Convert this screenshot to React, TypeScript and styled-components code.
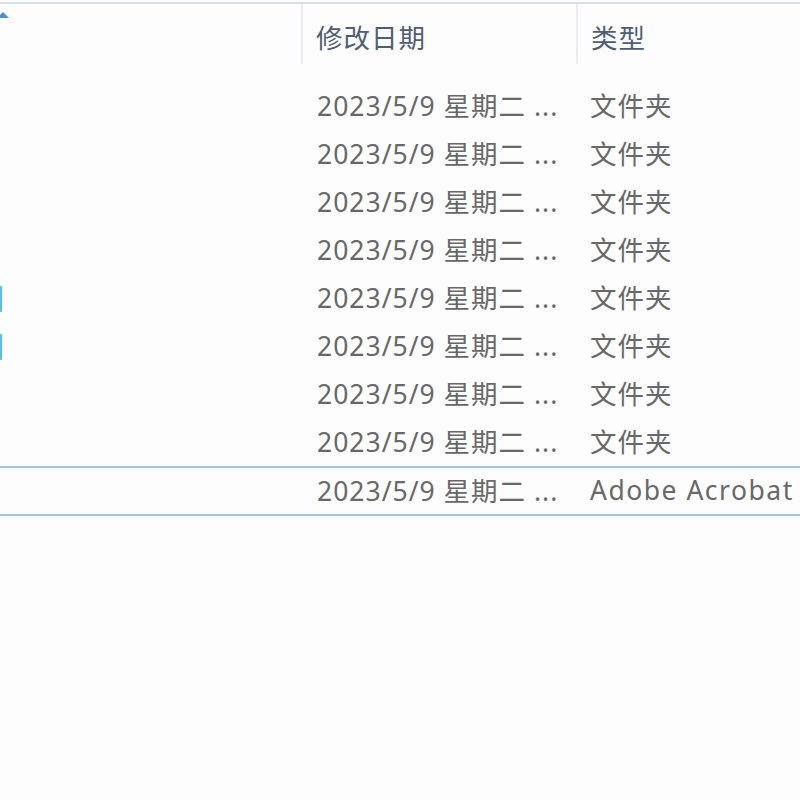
import React from "react";
import styled, { createGlobalStyle } from "styled-components";

const GlobalStyle = createGlobalStyle`
  html, body { margin: 0; padding: 0; background: #fdfdfd; }
  body { font-family: "Noto Sans", "Noto Sans CJK SC", sans-serif; }
  #root { width: 800px; height: 800px; overflow: hidden; }
`;

const COLS = "301px 275px 1fr";

const Page = styled.div`
  width: 800px;
  height: 800px;
  background: #fdfdfd;
  padding-top: 2px;
  box-sizing: border-box;
`;

const TopLine = styled.div`
  height: 2px;
  background: #d6e0e8;
`;

const HeaderRow = styled.div`
  display: grid;
  grid-template-columns: ${COLS};
  height: 60px;
  margin-bottom: 18px;
`;

const HeaderCell = styled.div<{ $sep?: boolean }>`
  position: relative;
  display: flex;
  align-items: center;
  padding-left: ${(p) => (p.$sep ? "13px" : "0")};
  border-left: ${(p) => (p.$sep ? "2px solid #e8ecf1" : "none")};
  font-size: 26.5px;
  letter-spacing: 1px;
  color: #4e5d73;
  padding-top: 4px;
  box-sizing: border-box;
  white-space: nowrap;
`;

const SortArrow = styled.svg`
  position: absolute;
  left: -4px;
  top: 7px;
`;

const Row = styled.div<{ $focused?: boolean }>`
  display: grid;
  grid-template-columns: ${COLS};
  height: ${(p) => (p.$focused ? "50px" : "48px")};
  box-sizing: border-box;
  border-top: 2px solid ${(p) => (p.$focused ? "#a6bfe2" : "transparent")};
  border-bottom: 2px solid ${(p) => (p.$focused ? "#a6bfe2" : "transparent")};
`;

const Cell = styled.div<{ $pad: number; $spacing?: number }>`
  display: flex;
  align-items: center;
  padding-left: ${(p) => p.$pad}px;
  padding-bottom: 3px;
  font-size: 26.5px;
  letter-spacing: ${(p) => p.$spacing ?? 1}px;
  color: #686868;
  white-space: nowrap;
  overflow: hidden;
`;

const IconEdge = styled.span`
  display: block;
  width: 2px;
  height: 26px;
  background: #5cbfe6;
  border-radius: 0 1px 1px 0;
  margin-top: 4px;
`;

type Item = { icon?: boolean; type: string };

const items: Item[] = [
  { type: "文件夹" },
  { type: "文件夹" },
  { type: "文件夹" },
  { type: "文件夹" },
  { type: "文件夹", icon: true },
  { type: "文件夹", icon: true },
  { type: "文件夹" },
  { type: "文件夹" },
];

export default function App() {
  return (
    <Page>
      <GlobalStyle />
      <TopLine />
      <HeaderRow>
        <HeaderCell>
          <SortArrow width="14" height="8" viewBox="0 0 14 8">
            <path d="M1 7 L7 1 L13 7 Z" fill="#4d8fcf" />
          </SortArrow>
        </HeaderCell>
        <HeaderCell $sep>修改日期</HeaderCell>
        <HeaderCell $sep>类型</HeaderCell>
      </HeaderRow>
      {items.map((it, i) => (
        <Row key={i}>
          <Cell $pad={0}>{it.icon && <IconEdge />}</Cell>
          <Cell $pad={16}>2023/5/9 星期二 ...</Cell>
          <Cell $pad={14}>{it.type}</Cell>
        </Row>
      ))}
      <Row $focused>
        <Cell $pad={0} />
        <Cell $pad={16}>2023/5/9 星期二 ...</Cell>
        <Cell $pad={14} $spacing={1.5}>Adobe Acrobat</Cell>
      </Row>
    </Page>
  );
}
